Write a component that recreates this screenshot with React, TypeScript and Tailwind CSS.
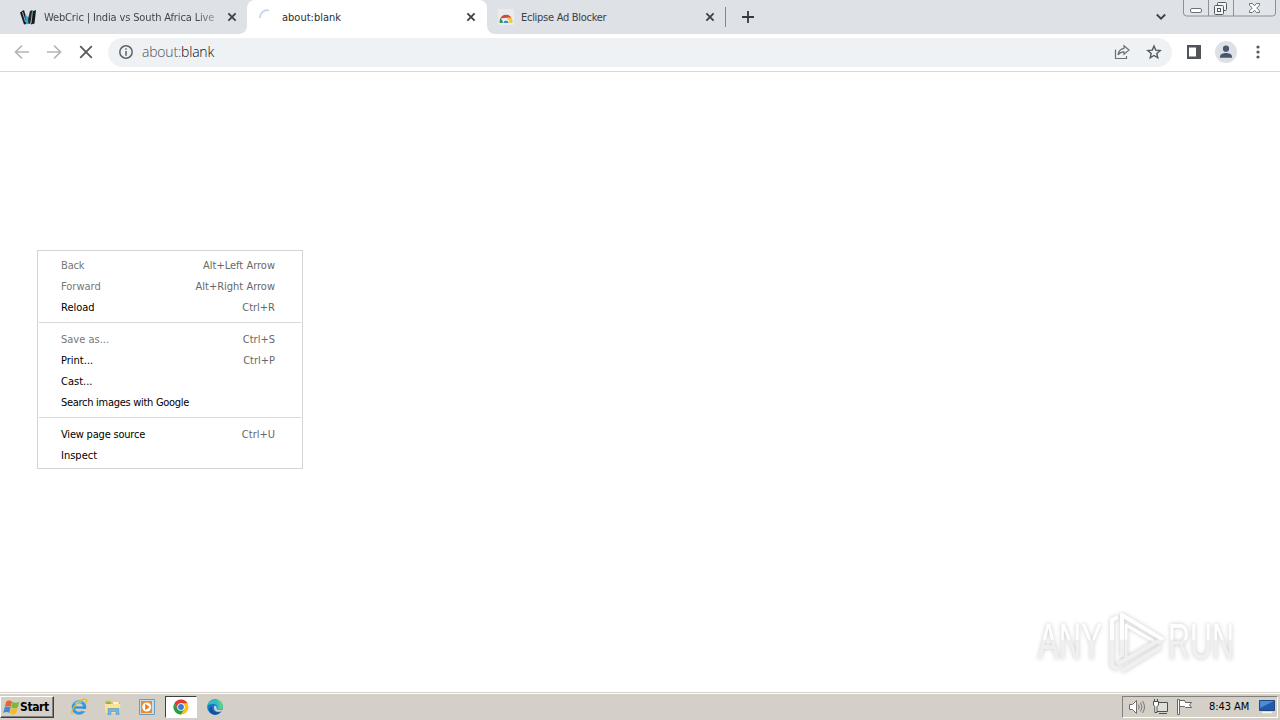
import { ReactNode } from "react";

type MenuEntry = {
  label: string;
  shortcut?: string;
  disabled?: boolean;
  spacing?: string;
};

const MENU_GROUPS: MenuEntry[][] = [
  [
    { label: "Back", shortcut: "Alt+Left Arrow", disabled: true, spacing: "tracking-[-0.15px]" },
    { label: "Forward", shortcut: "Alt+Right Arrow", disabled: true },
    { label: "Reload", shortcut: "Ctrl+R" },
  ],
  [
    { label: "Save as...", shortcut: "Ctrl+S", disabled: true },
    { label: "Print...", shortcut: "Ctrl+P" },
    { label: "Cast..." },
    { label: "Search images with Google", spacing: "tracking-[-0.29px]" },
  ],
  [
    { label: "View page source", shortcut: "Ctrl+U", spacing: "tracking-[-0.2px]" },
    { label: "Inspect" },
  ],
];

const CloseIcon = () => (
  <svg width="10" height="10" viewBox="0 0 10 10" className="shrink-0">
    <path d="M1.4 1.4 8.6 8.6M8.6 1.4 1.4 8.6" stroke="#3c4043" strokeWidth="1.8" />
  </svg>
);

const WebCricIcon = () => (
  <svg width="16" height="16" viewBox="0 0 16 16" className="shrink-0">
    <path d="M0 3.5 4 1 8 14.5 4 15.5Z" fill="#15191d" />
    <path d="M5 5 8 8 9.5 14 6 15.5Z" fill="#3fa4cf" />
    <path d="M8 10 10 2 12.5 1 10.5 14.5 8.5 15Z" fill="#20282e" />
    <path d="M12 2.5 16 1 14.5 14.5 11 15.5Z" fill="#15191d" />
    <path d="M2.5 3 5.5 13" stroke="#9ac8df" strokeWidth=".9" />
    <path d="M12.5 2.5 11 14" stroke="#8fc3da" strokeWidth=".8" />
  </svg>
);

const SpinnerIcon = () => (
  <svg width="16" height="16" viewBox="0 0 16 16" className="shrink-0">
    <path d="M1.2 9A7 7 0 0 1 10 1.5" fill="none" stroke="#c3d3ee" strokeWidth="1.7" />
  </svg>
);

const WebStoreIcon = () => (
  <svg width="16" height="16" viewBox="0 0 16 16" className="shrink-0">
    <path d="M0 0h16v16H0z" fill="#e9ebed" />
    <path d="M2.2 9.5A6.3 6.3 0 0 1 13.8 9.5L8 8.8Z" fill="#dc4437" />
    <path d="M1.7 14A6.3 6.3 0 0 1 2.5 9L6 14Z" fill="#279b55" />
    <path d="M9 8.6h4.3A6.3 6.3 0 0 1 14.2 14H9.8Z" fill="#f5c92f" />
    <path d="M4.6 14a3.4 3.4 0 0 1 6.8 0Z" fill="#fff" />
    <path d="M5.4 14a2.6 2.6 0 0 1 5.2 0Z" fill="#4b82dc" />
  </svg>
);

const ChromeIcon = () => (
  <svg width="16" height="16" viewBox="0 0 16 16">
    <circle cx="8" cy="8" r="7.5" fill="#fbc116" />
    <path d="M1.5 4.25A7.5 7.5 0 0 1 14.5 4.25H8L4.75 9.9Z" fill="#e33b2e" />
    <path d="M1.5 4.25A7.5 7.5 0 0 0 8 15.5L11.25 9.9H4.75Z" fill="#299d4f" />
    <circle cx="8" cy="8" r="3.75" fill="#fff" />
    <circle cx="8" cy="8" r="2.9" fill="#3b78e0" />
  </svg>
);

const ExplorerIcon = () => (
  <svg width="18" height="18" viewBox="0 0 18 18">
    <circle cx="9" cy="9.5" r="5.8" fill="none" stroke="#3a9bdc" strokeWidth="3" />
    <path d="M4 9.5h11" stroke="#2d8fd5" strokeWidth="2.2" />
    <path d="M10.5 11h6v2.2h-4Z" fill="#d4d0c8" />
    <path d="M5 5.5A6 6 0 0 1 12 4.5" fill="none" stroke="#8fd4f5" strokeWidth="1.2" />
    <path d="M2.5 16C-1 13 10-.5 16 1.5c1.2.8.5 2.7-.5 4" fill="none" stroke="#e9b92d" strokeWidth="1.3" />
  </svg>
);

const FolderIcon = () => (
  <svg width="18" height="18" viewBox="0 0 18 18">
    <path d="M1 2.5h5.5l1 1.5H16v11H1Z" fill="#e6bd50" />
    <path d="M2.5 4h4v2h-4z" fill="#6eb968" />
    <path d="M9 4h5.5v2H9z" fill="#faf5dd" />
    <path d="M.8 6h15.6l-.6 9H1.3Z" fill="#fbe499" />
    <path d="M4 16.5v-6h11v6h-3v-3H7v3Z" fill="#75b6e0" stroke="#498cb9" strokeWidth=".5" />
  </svg>
);

const MediaIcon = () => (
  <svg width="18" height="18" viewBox="0 0 18 18">
    <path d="M1.5 1.5h15v15h-15z" fill="#c5ddf0" stroke="#6e9ac0" />
    <path d="M3 3h11v12H3z" fill="#f18a20" />
    <circle cx="8.7" cy="9" r="4.5" fill="#fff" />
    <path d="m7.2 5.8 4.4 3.2-4.4 3.2Z" fill="#ed7817" />
  </svg>
);

const EdgeIcon = () => (
  <svg width="18" height="18" viewBox="0 0 18 18">
    <circle cx="9" cy="9" r="7.8" fill="#1679c5" />
    <path d="M1.5 7.5C3 .5 14-.8 16.8 8c.2 3.5-3 4.5-6 3.3 1.6-2.8-.3-5.5-3.5-5.3C4 5.9 2.2 7 1.5 7.5Z" fill="#31bdc5" />
    <path d="M11 1.6c4 1.2 5.5 3.6 5.8 6.4 0 2-1.5 3.6-4.2 3.6 1.7-2.8.7-6.6-1.6-10Z" fill="#5bd27c" />
    <path d="M6.3 8.6C5.4 12.5 9 15.5 14.6 14c-3.4 4.2-9.5 3.3-11-1.2-.4-2 .6-4 2.7-4.2Z" fill="#134f9f" />
    <path d="M8.2 8c1.6-.8 3 .8 2.4 3 1.4 1.3 4 1.2 5.8.3l-1 2C11 15 7 12.5 8.2 8Z" fill="#d4d0c8" />
  </svg>
);

const StartFlag = () => (
  <svg width="17" height="17" viewBox="0 0 17 16" className="shrink-0">
    <path d="M3.2 2C5 .5 7 .7 9 2L7.8 7.4C6 6.2 4 6.2 1.8 7.4Z" fill="#e9632a" />
    <path d="M9.5 2.3c2 1.2 4.4 1.2 6.9-.1L14.8 8c-2.2 1.2-4.4 1.2-6.6.1Z" fill="#79b843" />
    <path d="M1.6 8c2.2-1.3 4.2-1.2 6 0L6.2 13.4c-1.8-1.2-3.8-1-6 0Z" fill="#4488d3" />
    <path d="M8.1 8.5c2 1 4.3 1 6.5 0L13.2 14c-2.2 1.2-4.4 1.2-6.6.1Z" fill="#f3bd23" />
  </svg>
);

const Tab = ({ icon, title }: { icon: ReactNode; title: ReactNode }) => (
  <>
    {icon}
    <div className="ml-[7px] flex-1 whitespace-nowrap pt-px text-[11px] leading-4">{title}</div>
    <CloseIcon />
  </>
);

const WindowControls = () => (
  <svg width="94" height="18" viewBox="0 0 94 18" className="ml-4">
    <path d="M.5 0v13a3 3 0 0 0 3 3h86a3 3 0 0 0 3-3V0" fill="#e1e4e9" stroke="#8c9198" />
    <path d="M25.5 0v16M50.5 0v16" stroke="#8c9198" />
    <rect x="7.5" y="8.5" width="11" height="4" rx="1.5" fill="#fff" stroke="#6c7178" />
    <rect x="34.5" y="2.5" width="9" height="8" rx="1" fill="#f3f4f6" stroke="#555a61" />
    <rect x="31.5" y="5.5" width="9" height="9" rx="1" fill="#f3f4f6" stroke="#555a61" />
    <rect x="34.5" y="8.5" width="3" height="3" fill="#fff" stroke="#555a61" />
    <path
      d="M66.5 3.5h3l2 2.3 2-2.3h3v1.8L73.7 8l2.8 2.8v1.7h-3l-2-2.3-2 2.3h-3v-1.7L69.3 8l-2.8-2.7Z"
      fill="#fff"
      stroke="#6c7178"
    />
  </svg>
);

const TabStrip = () => (
  <div className="flex h-[34px] bg-[#dee1e6] text-[#3c4043]">
    <div className="flex w-[247px] items-center pl-5 pr-[10px]">
      <Tab
        icon={<WebCricIcon />}
        title={
          <span className="block w-[178px] bg-linear-to-r from-[#3c4043] from-85% to-[#3c404340] bg-clip-text pl-px tracking-[-0.14px] text-transparent">
            WebCric | India vs South Africa Live
          </span>
        }
      />
    </div>
    <div className="-ml-2 w-2 self-end">
      <svg width="8" height="8" viewBox="0 0 8 8">
        <path d="M8 0v8H0a8 8 0 0 0 8-8Z" fill="#fff" />
      </svg>
    </div>
    <div className="flex w-[240px] items-center rounded-t-lg bg-white pl-[12px] pr-[11px] text-[#2b2d30]">
      <Tab icon={<SpinnerIcon />} title="about:blank" />
    </div>
    <div className="-mr-2 w-2 self-end">
      <svg width="8" height="8" viewBox="0 0 8 8">
        <path d="M0 0v8h8a8 8 0 0 1-8-8Z" fill="#fff" />
      </svg>
    </div>
    <div className="flex w-[238px] items-center pl-[11px] pr-[10px]">
      <Tab icon={<WebStoreIcon />} title={<span className="tracking-[-0.28px]">Eclipse Ad Blocker</span>} />
    </div>
    <div className="mt-[7px] h-5 w-px bg-[#83878d]" />
    <svg width="12" height="12" viewBox="0 0 12 12" className="ml-4 mt-[11px]">
      <path d="M6 0v12M0 6h12" stroke="#35383c" strokeWidth="1.8" />
    </svg>
    <div className="flex-1" />
    <svg width="12" height="8" viewBox="0 0 12 8" className="mt-[13px]">
      <path d="m1.8 1.5 4.2 4.2 4.2-4.2" fill="none" stroke="#3c4043" strokeWidth="1.8" />
    </svg>
    <div className="mr-[3px]">
      <WindowControls />
    </div>
  </div>
);

const Toolbar = () => (
  <div className="flex h-[38px] items-center border-b border-[#d5d7da] bg-white pb-px">
    <svg width="16" height="16" viewBox="0 0 16 16" className="ml-[14px]">
      <path d="M15 8H2M8 1.5 1.5 8 8 14.5" fill="none" stroke="#b3b5b8" strokeWidth="1.7" />
    </svg>
    <svg width="16" height="16" viewBox="0 0 16 16" className="ml-4">
      <path d="M1 8h13M8 1.5 14.5 8 8 14.5" fill="none" stroke="#b3b5b8" strokeWidth="1.7" />
    </svg>
    <svg width="14" height="14" viewBox="0 0 14 14" className="ml-[17px]">
      <path d="m1.2 1.2 11.6 11.6M12.8 1.2 1.2 12.8" stroke="#56595d" strokeWidth="1.8" />
    </svg>
    <div className="ml-[15px] flex h-[29px] w-[1064px] items-center rounded-full bg-[#eff2f4] pl-[11px] pr-[10px]">
      <svg width="14" height="14" viewBox="0 0 14 14">
        <circle cx="7" cy="7" r="6.2" fill="none" stroke="#5f6368" strokeWidth="1.5" />
        <path d="M7 3.2v1.6M7 6v4.8" stroke="#5f6368" strokeWidth="1.5" />
      </svg>
      <div className="ml-[9px] flex-1 font-['Open_Sans',sans-serif] text-[14px] font-light leading-5 tracking-[-0.2px] text-[#4c5054]">
        about:<span className="text-[#0c0d0e]">blank</span>
      </div>
      <svg width="16" height="16" viewBox="0 0 16 16">
        <path d="M1.5 5.5v9h11V12" fill="none" stroke="#6b6f74" strokeWidth="1.2" />
        <path
          d="M10 1.8 15 6l-5 4.2V7.8C7.4 7.8 5.6 8.6 4 10.8c.5-3.7 2.6-6 6-6.5Z"
          fill="none"
          stroke="#6b6f74"
          strokeWidth="1.2"
        />
      </svg>
      <svg width="16" height="16" viewBox="0 0 16 16" className="ml-4">
        <path
          d="m8 2 1.7 4.1 4.5.4-3.4 2.9 1 4.4L8 11.5l-3.8 2.3 1-4.4-3.4-2.9 4.5-.4Z"
          fill="none"
          stroke="#55595e"
          strokeWidth="1.4"
        />
      </svg>
    </div>
    <svg width="14" height="14" viewBox="0 0 14 14" className="ml-[15px]">
      <path d="M0 0h14v14H0zM2 2.5v9h7v-9z" fill="#515459" fillRule="evenodd" />
    </svg>
    <svg width="22" height="22" viewBox="0 0 22 22" className="ml-[14px]">
      <circle cx="11" cy="11" r="11" fill="#dde0e4" />
      <circle cx="11" cy="7.7" r="3.1" fill="#4a5570" />
      <path d="M5 16.8v-1.2c0-2.4 3.5-3.5 6-3.5s6 1.1 6 3.5v1.2Z" fill="#4a5570" />
    </svg>
    <svg width="4" height="14" viewBox="0 0 4 14" className="ml-[19px]">
      <circle cx="2" cy="2" r="1.6" fill="#55595d" />
      <circle cx="2" cy="7" r="1.6" fill="#55595d" />
      <circle cx="2" cy="12" r="1.6" fill="#55595d" />
    </svg>
  </div>
);

const ContextMenu = () => (
  <div className="absolute left-[37px] top-[178px] h-[219px] w-[266px] border border-[#d4d4d4] bg-white px-px pt-1 text-[11px] text-black">
    {MENU_GROUPS.map((group, i) => (
      <div key={i}>
        {i > 0 && <div className="mb-[6px] mt-1 h-px bg-[#d9d9d9]" />}
        {group.map(({ label, shortcut, disabled, spacing }) => (
          <div key={label} className="flex h-[21px] items-center justify-between pl-[22px] pr-[26px] pt-[2px]">
            <span className={`${disabled ? "text-[#777]" : ""} ${spacing ?? ""}`}>{label}</span>
            <span className="text-[#686868]">{shortcut}</span>
          </div>
        ))}
      </div>
    ))}
  </div>
);

const Watermark = () => (
  <svg
    width="220"
    height="70"
    viewBox="0 0 220 70"
    className="absolute bottom-[17px] right-[28px] overflow-visible drop-shadow-[0_0_2px_rgba(0,0,0,0.22)]"
  >
    <defs>
      <linearGradient id="mark" x1="0" y1="0" x2="0" y2="70" gradientUnits="userSpaceOnUse">
        <stop offset=".49" stopColor="#fff" />
        <stop offset=".5" stopColor="#f0f0f0" />
      </linearGradient>
    </defs>
    <g fill="url(#mark)" fontFamily="'Liberation Sans Narrow', 'Liberation Sans', sans-serif" fontSize="50">
      <text x="6" y="54" textLength="64" lengthAdjust="spacingAndGlyphs">
        ANY
      </text>
      <text x="136" y="54" textLength="66" lengthAdjust="spacingAndGlyphs">
        RUN
      </text>
    </g>
    <g fill="none" stroke="url(#mark)" strokeWidth="4" strokeLinejoin="round">
      <path d="m86 12-6 3v46l6 3" />
      <path d="M90 52V10l40 24-4 4" />
      <path d="M94 20v34l29-17Z" strokeWidth="3" />
      <path d="m86 59 40-23M90 66l39-24" />
    </g>
  </svg>
);

const TASKS = [
  { name: "Internet Explorer", icon: <ExplorerIcon /> },
  { name: "Explorer", icon: <FolderIcon /> },
  { name: "Media Player", icon: <MediaIcon /> },
  { name: "Chrome", icon: <ChromeIcon />, active: true },
  { name: "Edge", icon: <EdgeIcon /> },
];

const Taskbar = () => (
  <div className="flex h-7 items-start border-t border-[#d4d0c8] bg-[#d4d0c8] pt-px shadow-[inset_0_1px_0_#fff]">
    <div className="mt-[2px] flex h-[22px] w-[54px] items-center border border-b-[#404040] border-l-white border-r-[#404040] border-t-white pl-[2px] font-bold text-black shadow-[inset_-1px_-1px_0_#808080]">
      <StartFlag />
      <span className="text-[12px] leading-4 tracking-[-0.4px]">Start</span>
    </div>
    <div className="ml-[9px] mt-[2px] flex gap-[2px]">
      {TASKS.map(({ name, icon, active }) => (
        <div
          key={name}
          className={
            active
              ? "flex h-[22px] w-8 items-center justify-center border border-b-white border-l-[#404040] border-r-white border-t-[#404040] bg-white"
              : "flex h-[22px] w-8 items-center justify-center"
          }
        >
          {icon}
        </div>
      ))}
    </div>
    <div className="flex-1" />
    <div className="mr-[2px] mt-[2px] flex h-[22px] w-[156px] items-center border border-b-white border-l-[#808080] border-r-white border-t-[#808080] pl-[5px]">
      <svg width="18" height="16" viewBox="0 0 18 16">
        <path d="M1.5 5.5h3l4-4v13l-4-4h-3Z" fill="#fff" stroke="#6d6d6d" />
        <path d="M10.5 5.5q1.5 2.5 0 5M12.5 3.5q3 4.5 0 9M14.5 2q4 6 0 12" fill="none" stroke="#777" />
      </svg>
      <svg width="18" height="16" viewBox="0 0 18 16" className="ml-[6px]">
        <path d="M4.5 3.5h11v9h-11z" fill="#dededb" stroke="#505050" />
        <path d="M7 14.5h8" stroke="#505050" />
        <path d="M1.5 2.5h5V6L5 7.5v6H2.8v-6L1.5 6Z" fill="#fff" stroke="#505050" />
        <path d="M2.5 0v2M5.5 0v2" stroke="#505050" />
      </svg>
      <svg width="17" height="16" viewBox="0 0 17 16" className="ml-[6px]">
        <path d="M1.5.5h2v15h-2z" fill="#fff" stroke="#666" />
        <path d="M3.5 1.5h5l1 2h6l-2 2.5 2 2.5h-6l-1-1h-5Z" fill="#fff" stroke="#666" />
      </svg>
      <span className="ml-[16px] whitespace-nowrap pt-px text-[11px] tracking-[-0.05px] text-black">8:43 AM</span>
      <svg width="16" height="14" viewBox="0 0 16 14" className="ml-[10px] shrink-0">
        <path d="M.5.5h15v10H.5z" fill="#2059ad" stroke="#21457d" />
        <path d="M1 1h14L1 8Z" fill="#4b8cd8" />
        <path d="M3 12.5h10" stroke="#f4f4f4" strokeWidth="1.5" />
      </svg>
    </div>
  </div>
);

export default function App() {
  return (
    <div className="flex h-screen w-screen flex-col overflow-hidden bg-white font-['DejaVu_Sans_Condensed','DejaVu_Sans',sans-serif]">
      <TabStrip />
      <Toolbar />
      <main className="relative flex-1 bg-white">
        <ContextMenu />
        <Watermark />
      </main>
      <Taskbar />
    </div>
  );
}
